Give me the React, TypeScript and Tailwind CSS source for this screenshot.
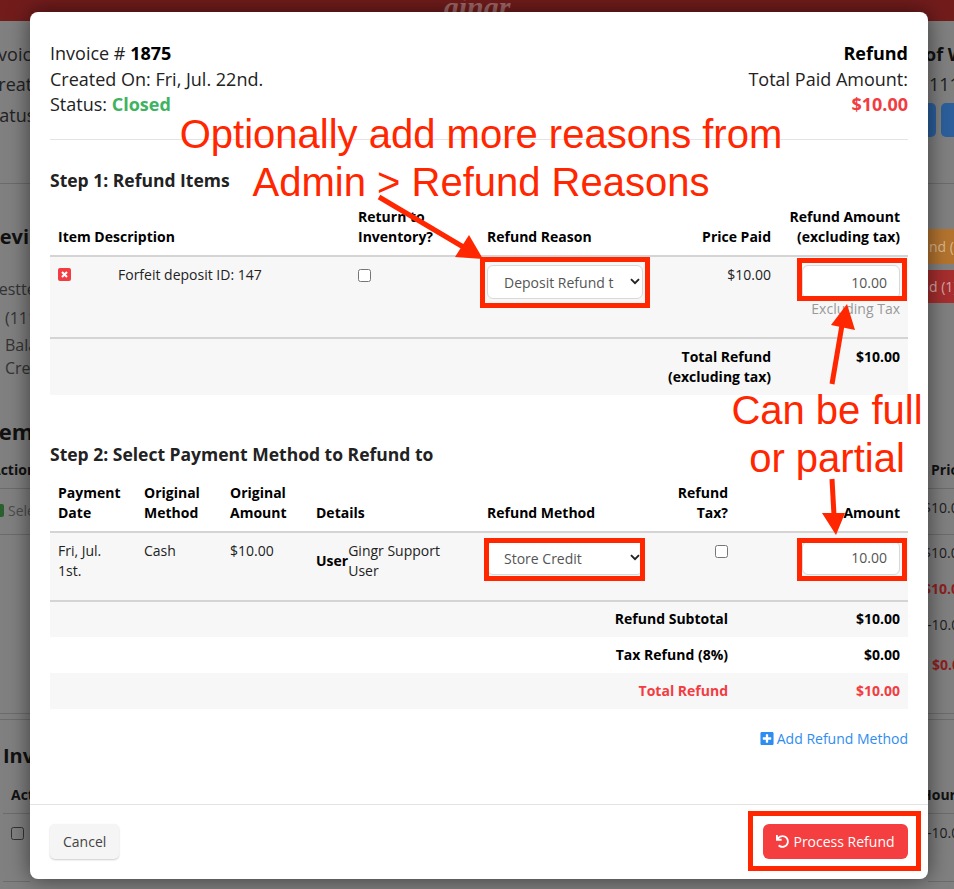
import React from "react";
import { FaUndo, FaPlusSquare } from "react-icons/fa";

function Chevron() {
  return (
    <svg viewBox="0 0 10 7" className="absolute right-[3px] top-[13px] w-[10px] h-[7px] pointer-events-none">
      <path d="M1 1.2 L5 5.2 L9 1.2" fill="none" stroke="#222" strokeWidth="1.9" />
    </svg>
  );
}

function Sel({ label, w }: { label: string; w: string }) {
  return (
    <div className={`relative h-[34px] ${w}`}>
      <select className="appearance-none w-full h-full bg-white border border-[#d9d9d9] rounded-[6px] pl-[16px] pr-[28px] pt-[2px] text-[14px] text-[#555] font-['Open_Sans',sans-serif] outline-none">
        <option>{label}</option>
      </select>
      <Chevron />
    </div>
  );
}

function Amount() {
  return (
    <input
      readOnly
      value="10.00"
      className="block ml-auto w-[98px] h-[34px] bg-white border border-[#d9d9d9] rounded-[6px] pr-[12px] text-right text-[14px] text-[#555] outline-none"
    />
  );
}

function Check() {
  return <input type="checkbox" className="appearance-none block w-[13px] h-[13px] bg-white border border-[#767676] rounded-[2.5px]" />;
}

function BgLine() {
  return <div className="h-px bg-[#6c6c6c] shrink-0" />;
}

function LeftStrip() {
  return (
    <div className="w-[30px] shrink-0 overflow-hidden whitespace-nowrap flex flex-col text-[#222]">
      <div className="mt-[23px] h-[20px] leading-[20px] text-[18px] ml-[-18px]">Invoice</div>
      <div className="mt-[10px] h-[20px] leading-[20px] text-[18px] ml-[-13px]">Created</div>
      <div className="mt-[11px] h-[20px] leading-[20px] text-[18px] ml-[-17px]">Status</div>
      <div className="mt-[58px]"><BgLine /></div>
      <div className="mt-[43px] h-[20px] leading-[20px] text-[20px] font-bold text-[#111] ml-[-15px]">Devil</div>
      <div className="mt-[32px] h-[20px] leading-[20px] text-[16px] text-[#333] ml-[-7px]">testte</div>
      <div className="mt-[9px] h-[20px] leading-[20px] text-[16px] text-[#333] ml-[5px]">(111</div>
      <div className="mt-[7px] h-[20px] leading-[20px] text-[16px] text-[#333] ml-[5px]">Balance</div>
      <div className="mt-[3px] h-[20px] leading-[20px] text-[16px] text-[#333] ml-[5px]">Credit</div>
      <div className="mt-[43px] h-[20px] leading-[20px] text-[22px] font-bold text-[#111] ml-[-18px]">Items</div>
      <div className="mt-[19px] h-[20px] leading-[20px] text-[14px] font-bold text-[#111] ml-[-9px]">Action</div>
      <div className="mt-[8px]"><BgLine /></div>
      <div className="mt-[11px] h-[20px] flex items-center">
        <div className="w-[4px] h-[13px] shrink-0 bg-[#2a5f2e] rounded-r-[2px]" />
        <span className="ml-[4px] text-[14px] text-[#4c4c4c]">Select</span>
      </div>
      <div className="mt-[14px]"><BgLine /></div>
      <div className="mt-[178px]"><BgLine /></div>
      <div className="mt-[5px]"><BgLine /></div>
      <div className="mt-[26px] h-[20px] leading-[20px] text-[20px] font-bold text-[#111] ml-[3px]">Invoices</div>
      <div className="mt-[19px] h-[20px] leading-[20px] text-[14px] font-bold text-[#111] ml-[11px]">Action</div>
      <div className="mt-[8px] ml-[3px]"><BgLine /></div>
      <div className="mt-[13px] h-[13px] ml-[11px] w-[13px] border border-[#333] rounded-[2.5px]" />
      <div className="mt-[41px] ml-[3px]"><BgLine /></div>
    </div>
  );
}

function RightStrip() {
  return (
    <div className="w-[26px] shrink-0 overflow-hidden whitespace-nowrap flex flex-col text-[#1d1d1d]">
      <div className="mt-[23px] h-[20px] leading-[20px] text-[18px] font-bold text-[#111] ml-[-3px]">of Work</div>
      <div className="mt-[10px] h-[20px] leading-[20px] text-[18px] ml-[1px]">1111</div>
      <div className="mt-[9px] h-[34px] flex gap-[5px] ml-[-8px]">
        <div className="w-[16px] h-full bg-[#2c5f9c] rounded-[5px] shrink-0" />
        <div className="w-[30px] h-full bg-[#2c5f9c] rounded-[5px] shrink-0" />
      </div>
      <div className="mt-[46px]"><BgLine /></div>
      <div className="mt-[45px] h-[35px] leading-[35px] bg-[#b4742f] text-[14px] text-[#d9b88f] pl-[1px]">nd (1)</div>
      <div className="mt-[6px] h-[33px] leading-[33px] bg-[#a62e2e] text-[14px] text-[#d8a8a8] pl-[1px]">d (1)</div>
      <div className="mt-[157px] h-[20px] leading-[20px] text-[14px] font-bold text-[#111] ml-[3px]">Price</div>
      <div className="mt-[8px]"><BgLine /></div>
      <div className="mt-[9px] h-[20px] leading-[20px] text-[14px] ml-[-5px]">$10.00</div>
      <div className="mt-[16px]"><BgLine /></div>
      <div className="mt-[8px] h-[20px] leading-[20px] text-[14px] ml-[-5px]">$10.00</div>
      <div className="mt-[16px] h-[20px] leading-[20px] text-[14px] font-bold text-[#8e2020] ml-[-5px]">$10.00</div>
      <div className="mt-[16px] h-[20px] leading-[20px] text-[14px] ml-[-1px]">-10.00</div>
      <div className="mt-[20px] h-[20px] leading-[20px] text-[14px] font-bold text-[#8e2020] ml-[4px]">$0.00</div>
      <div className="mt-[38px]"><BgLine /></div>
      <div className="mt-[5px]"><BgLine /></div>
      <div className="mt-[65px] h-[20px] leading-[20px] text-[14px] font-bold text-[#111] ml-[-7px]">Hours</div>
      <div className="mt-[8px]"><BgLine /></div>
      <div className="mt-[9px] h-[20px] leading-[20px] text-[14px] ml-[-1px]">-10.00</div>
      <div className="mt-[38px]"><BgLine /></div>
    </div>
  );
}

function RemoveIcon() {
  return (
    <svg viewBox="0 0 13 13" className="block w-[13px] h-[13px]">
      <rect width="13" height="13" rx="2" fill="#f23c42" />
      <path d="M4 4 L9 9 M9 4 L4 9" stroke="#fff" strokeWidth="2.1" />
    </svg>
  );
}

function ItemsTable() {
  return (
    <table className="w-full table-fixed border-collapse text-[14px] leading-[20px] text-[#222] mt-[6px]">
      <colgroup>
        <col className="w-[60px]" />
        <col className="w-[240px]" />
        <col className="w-[129px]" />
        <col className="w-[176px]" />
        <col className="w-[124px]" />
        <col className="w-[129px]" />
      </colgroup>
      <thead>
        <tr className="border-b-2 border-[#d4d4d4] text-black align-bottom">
          <th colSpan={2} className="p-[8px] font-bold text-left">Item Description</th>
          <th className="p-[8px] font-bold text-left">Return to Inventory?</th>
          <th className="p-[8px] font-bold text-left">Refund Reason</th>
          <th className="p-[8px] font-bold text-right">Price Paid</th>
          <th className="p-[8px] font-bold text-right">Refund Amount (excluding tax)</th>
        </tr>
      </thead>
      <tbody>
        <tr className="h-[82px] bg-[#f7f7f7] border-b-2 border-[#d4d4d4] align-top">
          <td className="p-[8px] pt-[11px]"><RemoveIcon /></td>
          <td className="p-[8px]">Forfeit deposit ID: 147</td>
          <td className="p-[8px] pt-[12px]"><Check /></td>
          <td className="p-[8px]"><Sel label="Deposit Refund t" w="w-[156px]" /></td>
          <td className="p-[8px] text-right">$10.00</td>
          <td className="px-[8px] pt-[8px]">
            <Amount />
            <div className="text-right text-[#999]">Excluding Tax</div>
          </td>
        </tr>
        <tr className="h-[57px] bg-[#f7f7f7] align-top font-bold text-black">
          <td colSpan={4} />
          <td className="px-[8px] pt-[8px] text-right">Total Refund (excluding tax)</td>
          <td className="px-[8px] pt-[8px] text-right">$10.00</td>
        </tr>
      </tbody>
    </table>
  );
}

function SumRow({ label, value, tone }: { label: string; value: string; tone: string }) {
  return (
    <tr className={`h-[36px] font-bold align-middle ${tone}`}>
      <td colSpan={4} />
      <td colSpan={2} className="px-[8px] text-right">{label}</td>
      <td className="px-[8px] text-right">{value}</td>
    </tr>
  );
}

function PaymentsTable() {
  return (
    <table className="w-full table-fixed border-collapse text-[14px] leading-[20px] text-[#222] mt-[7px]">
      <colgroup>
        <col className="w-[86px]" />
        <col className="w-[86px]" />
        <col className="w-[86px]" />
        <col className="w-[171px]" />
        <col className="w-[181px]" />
        <col className="w-[76px]" />
        <col className="w-[172px]" />
      </colgroup>
      <thead>
        <tr className="border-b-2 border-[#d4d4d4] text-black align-bottom">
          <th className="p-[8px] font-bold text-left">Payment Date</th>
          <th className="p-[8px] font-bold text-left">Original Method</th>
          <th className="p-[8px] font-bold text-left">Original Amount</th>
          <th className="p-[8px] font-bold text-left">Details</th>
          <th className="p-[8px] font-bold text-left">Refund Method</th>
          <th className="py-[8px] pr-[8px] font-bold text-right">Refund Tax?</th>
          <th className="p-[8px] font-bold text-right">Amount</th>
        </tr>
      </thead>
      <tbody>
        <tr className="h-[69px] bg-[#f7f7f7] border-b-2 border-[#d4d4d4] align-top">
          <td className="p-[8px]">Fri, Jul. 1st.</td>
          <td className="p-[8px]">Cash</td>
          <td className="p-[8px]">$10.00</td>
          <td className="p-[8px]">
            <div className="flex items-center">
              <span className="font-bold text-black">User</span>
              <span>Gingr Support User</span>
            </div>
          </td>
          <td className="p-[8px]"><Sel label="Store Credit" w="w-[156px]" /></td>
          <td className="p-[8px] pt-[12px]">
            <div className="flex justify-end"><Check /></div>
          </td>
          <td className="p-[8px]"><Amount /></td>
        </tr>
        <SumRow label="Refund Subtotal" value="$10.00" tone="bg-[#f7f7f7] text-black" />
        <SumRow label="Tax Refund (8%)" value="$0.00" tone="bg-white text-black" />
        <SumRow label="Total Refund" value="$10.00" tone="bg-[#f7f7f7] text-[#f23c42]" />
      </tbody>
    </table>
  );
}

function Modal() {
  return (
    <div className="absolute left-[30px] top-[12px] w-[898px] h-[867px] bg-white rounded-[8px] shadow-[0_0_22px_rgba(0,0,0,0.55)] flex flex-col font-['Open_Sans',sans-serif]">
      <div className="h-[792px] px-[20px] pt-[29px] shrink-0">
        <div className="flex justify-between text-[18px] leading-[25.6px] text-[#222]">
          <div>
            <div>Invoice # <b className="text-black">1875</b></div>
            <div>Created On: Fri, Jul. 22nd.</div>
            <div>Status: <b className="text-[#3fb35f]">Closed</b></div>
          </div>
          <div className="text-right">
            <div className="font-bold text-black">Refund</div>
            <div>Total Paid Amount:</div>
            <div className="font-bold text-[#f23c42]">$10.00</div>
          </div>
        </div>
        <div className="mt-[21px] h-px bg-[#e4e4e4]" />
        <h3 className="mt-[28px] text-[17.5px] leading-[25.6px] font-bold text-[#222]">Step 1: Refund Items</h3>
        <ItemsTable />
        <h3 className="mt-[47px] text-[17.5px] leading-[25.6px] font-bold text-[#222]">Step 2: Select Payment Method to Refund to</h3>
        <PaymentsTable />
        <div className="mt-[20px] flex justify-end items-center gap-[3px] text-[14px] leading-[20px] text-[#2f8cf0]">
          <FaPlusSquare className="w-[14px] h-[15px]" />
          <span>Add Refund Method</span>
        </div>
      </div>
      <div className="flex-1 border-t border-[#e4e4e4] px-[20px] pt-[19px] flex justify-between items-start">
        <button className="h-[35px] px-[13px] bg-[#f5f5f5] rounded-[5px] shadow-[0_1px_2px_rgba(0,0,0,0.2)] text-[14px] text-[#444]">Cancel</button>
        <button className="h-[35px] w-[145px] bg-[#f43e3f] rounded-[6px] text-[14px] text-white flex items-center justify-center gap-[4px]">
          <FaUndo className="w-[13px] h-[13px]" />
          <span>Process Refund</span>
        </button>
      </div>
    </div>
  );
}

function Annotations() {
  return (
    <div className="font-['Liberation_Sans',sans-serif] text-[#ff2600]">
      <div className="absolute left-[120px] top-[110px] w-[722px] text-center text-[40px] leading-[48px] whitespace-nowrap">
        Optionally add more reasons from
        <br />
        Admin &gt; Refund Reasons
      </div>
      <div className="absolute left-[700px] top-[386px] w-[254px] text-center text-[40px] leading-[48px] whitespace-nowrap">
        Can be full
        <br />
        or partial
      </div>
      <div className="absolute left-[480px] top-[257px] w-[170px] h-[51px] border-[5px] border-[#ff2600]" />
      <div className="absolute left-[797px] top-[258px] w-[110px] h-[43px] border-[5px] border-[#ff2600]" />
      <div className="absolute left-[484px] top-[538px] w-[161px] h-[43px] border-[5px] border-[#ff2600]" />
      <div className="absolute left-[797px] top-[538px] w-[110px] h-[43px] border-[5px] border-[#ff2600]" />
      <div className="absolute left-[748px] top-[811px] w-[173px] h-[60px] border-[5px] border-[#ff2600]" />
      <svg viewBox="0 0 954 889" className="absolute inset-0 w-[954px] h-[889px] pointer-events-none">
        <line x1="379" y1="197" x2="465" y2="248" stroke="#ff2600" strokeWidth="5" />
        <polygon points="455,257 469,235 483,259" fill="#ff2600" />
        <line x1="832" y1="384" x2="842" y2="325" stroke="#ff2600" strokeWidth="5" />
        <polygon points="847,304 831,325 855,330" fill="#ff2600" />
        <line x1="832" y1="479" x2="834" y2="515" stroke="#ff2600" strokeWidth="5" />
        <polygon points="822,513 845,513 836,535" fill="#ff2600" />
      </svg>
    </div>
  );
}

export default function App() {
  return (
    <div className="relative w-[954px] h-[889px] overflow-hidden bg-[#808080] font-['Open_Sans',sans-serif]">
      <div className="h-[21px] bg-[#731c1c] flex justify-center overflow-hidden">
        <span className="font-['Liberation_Serif',serif] italic font-bold text-[30px] leading-[14px] text-[#a26a6a]">gingr</span>
      </div>
      <div className="flex justify-between h-[868px]">
        <LeftStrip />
        <RightStrip />
      </div>
      <Modal />
      <Annotations />
    </div>
  );
}
